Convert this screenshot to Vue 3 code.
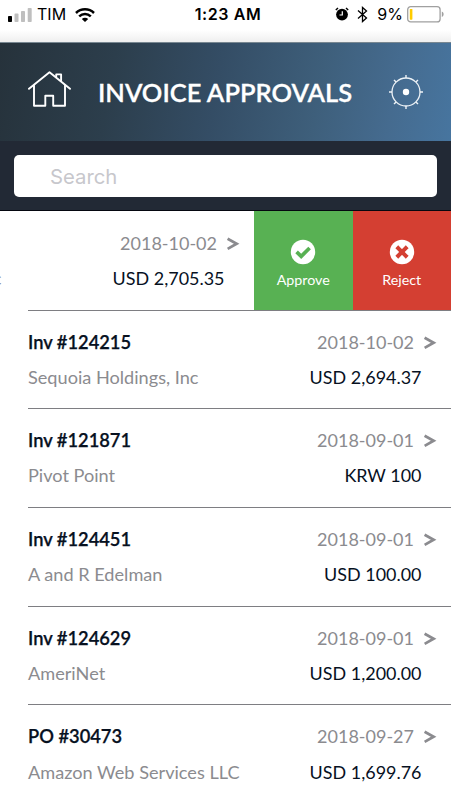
<template>
    <div class="screen">
        <div class="status-bar">
            <div class="status-left">
                <svg class="signal" width="25" height="14" viewBox="0 0 25 14">
                    <rect x="0" y="8" width="4" height="6" rx="0.8" fill="#000" />
                    <rect x="6.5" y="5.6" width="4" height="8.4" rx="0.8" fill="#bfbfbf" />
                    <rect x="13" y="3" width="4" height="11" rx="0.8" fill="#bfbfbf" />
                    <rect x="19.7" y="0" width="4" height="14" rx="0.8" fill="#bfbfbf" />
                </svg>
                <span class="carrier">TIM</span>
                <svg class="wifi" width="20" height="14" viewBox="0 0 20 14">
                    <g fill="none" stroke="#000" stroke-width="2.5">
                        <path d="M1 5 C6 0.1 14 0.1 19 5" />
                        <path d="M4.2 8.4 C7.6 5.2 12.4 5.2 15.8 8.4" />
                    </g>
                    <path d="M6.8 10.9 C8.7 9.2 11.3 9.2 13.2 10.9 L10 14 Z" fill="#000" />
                </svg>
            </div>
            <div class="clock">1:23 AM</div>
            <div class="status-right">
                <svg class="alarm" width="14" height="14" viewBox="0 0 14 14">
                    <circle cx="7" cy="7.6" r="5.9" />
                    <path d="M0.8 3 L3 0.9 M13.2 3 L11 0.9" stroke="#000" stroke-width="1.4" />
                    <path d="M7.3 4.2 V8 H4.5" fill="none" stroke="#fff" stroke-width="1.2" />
                </svg>
                <svg class="bluetooth" width="11" height="17" viewBox="0 0 11 17">
                    <path d="M1 4.5 L9.5 12 L5.5 15.5 V1.5 L9.5 5 L1 12.5" fill="none" stroke="#000" stroke-width="1.3" />
                </svg>
                <span class="percent">9%</span>
                <svg class="battery" width="37" height="17" viewBox="0 0 37 17">
                    <rect x="0.7" y="0.7" width="32.4" height="15.2" rx="3" fill="#fff" stroke="#a0a0a0" stroke-width="1.3" />
                    <rect x="2.8" y="2.9" width="2.6" height="10.8" rx="0.6" fill="#fc0" />
                    <path d="M34.8 5.6 C37.2 6.3 37.2 10.3 34.8 11 Z" fill="#a0a0a0" />
                </svg>
            </div>
        </div>

        <header class="header">
            <svg class="home" width="44" height="38" viewBox="0 0 44 38">
                <g fill="none" stroke="#fff" stroke-width="1.9" stroke-linecap="round" stroke-linejoin="round">
                    <path d="M2 18.8 L22.5 2.2 L43 18.8" />
                    <path d="M7 15.5 V35.8 H18.3 V25.7 H26.2 V35.8 H38 V15.5" />
                    <path d="M29.2 6.8 V4.4 H34.1 V10.5" />
                </g>
            </svg>
            <h1 class="title">INVOICE APPROVALS</h1>
            <svg class="gear" width="34" height="34" viewBox="0 0 34 34">
                <circle cx="17" cy="17" r="14" fill="none" stroke="#eef3f7" stroke-width="1.3" />
                <path d="M17 0 V3 M17 31 V34 M0 17 H3 M31 17 H34 M5 5 L7.1 7.1 M26.9 26.9 L29 29 M29 5 L26.9 7.1 M7.1 26.9 L5 29" stroke="#eef3f7" stroke-width="1.4" />
                <circle cx="17" cy="17" r="3.2" fill="#fff" />
            </svg>
        </header>

        <div class="search-bar">
            <input v-model="keyword" class="search-input" type="text" placeholder="Search" />
        </div>

        <div class="list">
            <div v-for="(item, index) in invoices" :key="index" class="row" :class="{ swiped: item.swiped }">
                <div class="row-content">
                    <div class="line">
                        <span class="number">{{ item.number }}</span>
                        <span class="date">{{ item.date }}</span>
                        <svg class="arrow" width="13" height="14" viewBox="0 0 13 14">
                            <path d="M0.6 1.7 L9.6 6.8 L0.6 11.9" fill="none" stroke="#8b8b8f" stroke-width="2.8" />
                        </svg>
                    </div>
                    <div class="line">
                        <span class="company">{{ item.company }}</span>
                        <span class="amount">{{ item.amount }}</span>
                    </div>
                </div>
                <div v-if="item.swiped" class="actions">
                    <button class="action approve">
                        <svg width="26" height="26" viewBox="0 0 26 26">
                            <circle cx="13" cy="13" r="12.2" fill="#fff" />
                            <path d="M6.6 12.9 L11.2 17.4 L19.6 9" fill="none" stroke="#58b153" stroke-width="3.7" />
                        </svg>
                        <span>Approve</span>
                    </button>
                    <button class="action reject">
                        <svg width="26" height="26" viewBox="0 0 26 26">
                            <circle cx="13" cy="13" r="12.2" fill="#fff" />
                            <path d="M9.2 9.2 L16.8 16.8 M16.8 9.2 L9.2 16.8" fill="none" stroke="#d43f32" stroke-width="4" stroke-linecap="square" />
                        </svg>
                        <span>Reject</span>
                    </button>
                </div>
            </div>
        </div>
    </div>
</template>

<script setup>
import { ref } from 'vue'

const keyword = ref('')

const invoices = ref([
    { number: '', company: 'Sequoia Holdings, Inc', date: '2018-10-02', amount: 'USD 2,705.35', swiped: true },
    { number: 'Inv #124215', company: 'Sequoia Holdings, Inc', date: '2018-10-02', amount: 'USD 2,694.37' },
    { number: 'Inv #121871', company: 'Pivot Point', date: '2018-09-01', amount: 'KRW 100' },
    { number: 'Inv #124451', company: 'A and R Edelman', date: '2018-09-01', amount: 'USD 100.00' },
    { number: 'Inv #124629', company: 'AmeriNet', date: '2018-09-01', amount: 'USD 1,200.00' },
    { number: 'PO #30473', company: 'Amazon Web Services LLC', date: '2018-09-27', amount: 'USD 1,699.76' }
])
</script>

<style>
body {
    margin: 0;
    background: #fff;
}
</style>

<style scoped>
.screen {
    width: 451px;
    height: 800px;
    overflow: hidden;
    background: #fff;
    font-family: Lato, sans-serif;
}

.status-bar {
    display: grid;
    grid-template-columns: 1fr auto 1fr;
    align-items: start;
    height: 42px;
    box-sizing: border-box;
    padding: 0 7px 0 8px;
    background: linear-gradient(#fff 30px, #efefef);
    color: #000;
    font-family: Inter, sans-serif;
    font-size: 16px;
    line-height: 29px;
}

.status-left,
.status-right {
    display: flex;
    align-items: center;
    height: 29px;
}

.status-right {
    justify-content: flex-end;
}

.carrier {
    margin-left: 4px;
}

.wifi {
    margin-left: 9px;
}

.clock {
    padding-left: 4px;
    font-weight: 600;
    letter-spacing: 0.6px;
}

.alarm {
    margin-top: -1px;
}

.bluetooth {
    margin-left: 8px;
}

.percent {
    margin-left: 9px;
}

.battery {
    margin: 0 0 0 4px;
}

.header {
    display: flex;
    align-items: center;
    height: 99px;
    box-sizing: border-box;
    padding: 0 28px;
    border-top: 1px solid #788791;
    background: linear-gradient(100deg, #26323b 0%, #2c3e4c 25%, #344d65 48%, #3e5f7b 70%, #456b8f 86%, #47759f 100%);
}

.home {
    margin: -6px 0 0 -1px;
}

.title {
    flex: 1;
    margin: 0 0 0 27px;
    color: #fff;
    font-size: 25.5px;
    font-weight: 600;
    -webkit-text-stroke: 0.3px #fff;
    white-space: nowrap;
}

.search-bar {
    height: 70px;
    box-sizing: border-box;
    padding: 14px;
    background: #222935;
    border-bottom: 1px solid #05070f;
}

.search-input {
    display: block;
    width: 100%;
    height: 42px;
    box-sizing: border-box;
    padding: 0 36px;
    border: 0;
    border-radius: 5px;
    outline: none;
    background: #fff;
    font-family: Inter, sans-serif;
    font-size: 20.3px;
}

.search-input::placeholder {
    color: #c7c7cc;
    opacity: 1;
}

.row {
    position: relative;
    height: 98.7px;
    box-sizing: border-box;
    overflow: hidden;
}

.row::after {
    content: '';
    position: absolute;
    left: 28px;
    right: 0;
    bottom: 0;
    height: 1px;
    background: #7e7e82;
}

.row-content {
    height: 100%;
    box-sizing: border-box;
    padding: 13.4px 15px 0 28px;
}

.swiped {
    display: flex;
    height: 99.6px;
}

.swiped .row-content {
    flex: none;
    width: 451px;
    margin-left: -197px;
    padding-top: 14.4px;
}

.line {
    display: flex;
    align-items: center;
    height: 35.2px;
    font-size: 18px;
    white-space: nowrap;
}

.number {
    color: #07111f;
    font-size: 18.3px;
    font-weight: 600;
    -webkit-text-stroke: 0.25px #07111f;
}

.date {
    margin-left: auto;
    color: #8b8b8f;
}

.arrow {
    margin: 2px -1px 0 10px;
}

.company {
    color: #8b8b8f;
    font-size: 18.15px;
}

.amount {
    margin: 0 14.5px 0 auto;
    color: #07111f;
    font-size: 17.95px;
}

.actions {
    display: flex;
    flex: 1;
}

.action {
    display: flex;
    flex: 1;
    flex-direction: column;
    align-items: center;
    padding: 28px 0 0;
    border: 0;
    color: #fff;
    font-family: inherit;
    font-size: 14.3px;
    line-height: 18px;
}

.action span {
    margin-top: 6px;
}

.approve {
    background: #58b153;
}

.reject {
    background: #d43f32;
}
</style>
